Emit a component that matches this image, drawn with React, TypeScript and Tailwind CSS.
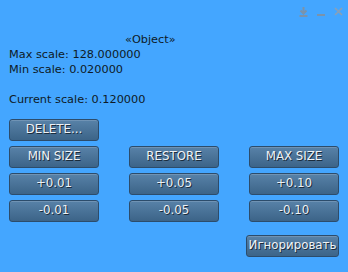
import React from "react";

const Btn = ({ label, w = "w-[90px]" }: { label: string; w?: string }) => (
  <button
    className={`${w} h-[22px] rounded-[3px] border border-[#2c4c6b] bg-gradient-to-b from-[#5882a8] to-[#3c6488] text-[11.8px] leading-none text-[#eef2f6] [text-shadow:1px_1px_0_#1b2c3c] shadow-[inset_0_1px_0_rgba(255,255,255,0.15)]`}
    style={{ fontFamily: '"DejaVu Sans", sans-serif' }}
  >
    {label}
  </button>
);

export default function App() {
  return (
    <div
      className="w-[348px] h-[272px] bg-[#44a6ff] text-[#0e1a26] text-[11.3px] relative overflow-hidden"
      style={{ fontFamily: '"DejaVu Sans", sans-serif' }}
    >
      <div className="absolute left-[299px] top-[7px] flex items-start gap-[9px]">
        <svg width="9" height="10" viewBox="0 0 9 10">
          <path d="M4.5 0 V6.5 M1.5 3.5 L4.5 6.5 L7.5 3.5" stroke="#7a93ab" strokeWidth="2" fill="none" />
          <rect x="0.5" y="8" width="8" height="2" fill="#7a93ab" />
        </svg>
        <svg width="8" height="10" viewBox="0 0 8 10">
          <rect x="0" y="7" width="8" height="2" fill="#7a93ab" />
        </svg>
        <svg width="9" height="9" viewBox="0 0 9 9">
          <path d="M1 1 L8 8 M8 1 L1 8" stroke="#8aa0b6" strokeWidth="1.6" />
        </svg>
      </div>
      <div className="pt-[32px] pl-[9px] leading-[15px]">
        <div className="pl-[116px]">«Object»</div>
        <div>Max scale: 128.000000</div>
        <div>Min scale: 0.020000</div>
        <div>&nbsp;</div>
        <div>Current scale: 0.120000</div>
      </div>
      <div className="pl-[9px] pt-[12px] flex flex-col gap-[5px]">
        <div className="flex">
          <Btn label="DELETE..." />
        </div>
        <div className="flex gap-[30px]">
          <Btn label="MIN SIZE" />
          <Btn label="RESTORE" />
          <Btn label="MAX SIZE" />
        </div>
        <div className="flex gap-[30px]">
          <Btn label="+0.01" />
          <Btn label="+0.05" />
          <Btn label="+0.10" />
        </div>
        <div className="flex gap-[30px]">
          <Btn label="-0.01" />
          <Btn label="-0.05" />
          <Btn label="-0.10" />
        </div>
        <div className="flex justify-end pr-[9px] pt-[8px]">
          <Btn label="Игнорировать" w="w-[93px]" />
        </div>
      </div>
    </div>
  );
}
